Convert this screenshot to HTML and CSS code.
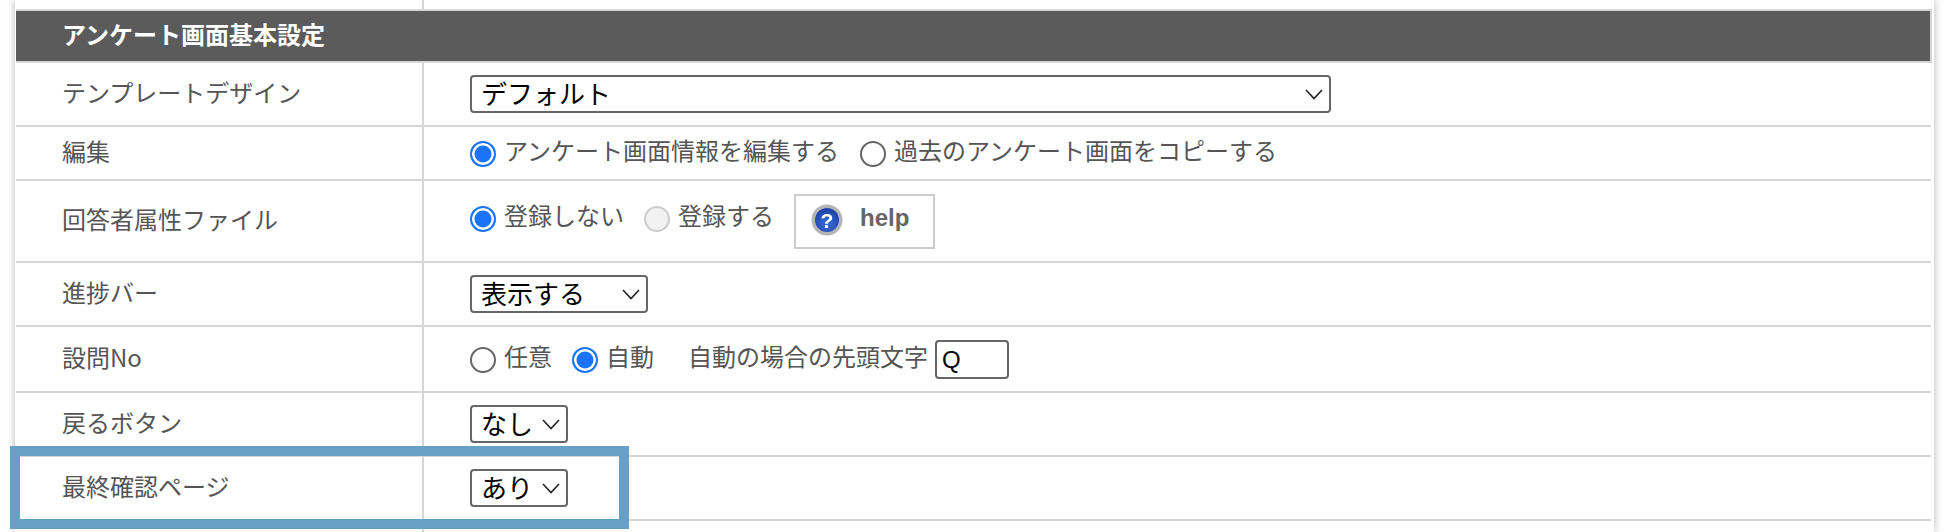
FILE: index.html
```html
<!DOCTYPE html>
<html lang="ja">
<head>
    <meta charset="UTF-8">
    <meta name="viewport" content="width=device-width, initial-scale=1.0">
    <title>アンケート画面基本設定</title>
    <link rel="stylesheet" href="styles.css">
</head>
<body>
    <div class="page">
        <div class="top-gap"><div class="top-gap-left"></div></div>
        <table class="settings">
            <colgroup>
                <col class="col-label">
                <col>
            </colgroup>
            <tr class="heading">
                <th colspan="2">アンケート画面基本設定</th>
            </tr>
            <!-- Template -->
            <tr class="row-template">
                <td class="label">テンプレートデザイン</td>
                <td class="field">
                    <select class="select select-wide"><option>デフォルト</option></select>
                </td>
            </tr>
            <!-- Edit -->
            <tr class="row-edit">
                <td class="label">編集</td>
                <td class="field">
                    <div class="edit-line">
                        <label class="choice choice-edit"><input type="radio" name="edit" checked>アンケート画面情報を編集する</label>
                        <label class="choice choice-edit"><input type="radio" name="edit">過去のアンケート画面をコピーする</label>
                    </div>
                </td>
            </tr>
            <!-- Respondent file -->
            <tr class="row-file">
                <td class="label">回答者属性ファイル</td>
                <td class="field">
                    <div class="file-line">
                        <label class="choice"><input type="radio" name="file" checked>登録しない</label>
                        <label class="choice"><input type="radio" name="file" disabled>登録する</label>
                        <a class="help" href="#">
                            <svg class="help-icon" viewBox="0 0 32 32" width="32" height="32">
                                <defs>
                                    <radialGradient id="help-ball" cx="50%" cy="65%" r="60%">
                                        <stop offset="0%" stop-color="#3d6fdc"/>
                                        <stop offset="100%" stop-color="#1d43a8"/>
                                    </radialGradient>
                                </defs>
                                <circle cx="16" cy="16" r="15.5" fill="#b5b5b5"/>
                                <circle cx="16" cy="16" r="12" fill="url(#help-ball)"/>
                                <text x="16" y="23.5" text-anchor="middle" class="help-mark">?</text>
                            </svg>
                            <span>help</span>
                        </a>
                    </div>
                </td>
            </tr>
            <!-- Progress bar -->
            <tr class="row-progress">
                <td class="label">進捗バー</td>
                <td class="field">
                    <select class="select select-mid"><option>表示する</option></select>
                </td>
            </tr>
            <!-- Question number -->
            <tr class="row-number">
                <td class="label">設問No</td>
                <td class="field">
                    <div class="number-line">
                        <label class="choice"><input type="radio" name="no">任意</label>
                        <label class="choice"><input type="radio" name="no" checked>自動</label>
                        <span class="prefix-label">自動の場合の先頭文字</span>
                        <input class="prefix" type="text" value="Q">
                    </div>
                </td>
            </tr>
            <!-- Back button -->
            <tr class="row-back">
                <td class="label">戻るボタン</td>
                <td class="field">
                    <select class="select select-small"><option>なし</option></select>
                </td>
            </tr>
            <!-- Confirm page -->
            <tr class="row-confirm">
                <td class="label">最終確認ページ</td>
                <td class="field">
                    <select class="select select-small"><option>あり</option></select>
                </td>
            </tr>
            <tr class="row-rest">
                <td class="label"></td>
                <td class="field"></td>
            </tr>
        </table>
        <div class="highlight"></div>
    </div>
</body>
</html>
```

FILE: styles.css
```css
* {
    box-sizing: border-box;
}

html, body {
    height: 100%;
    overflow: hidden;
}

body {
    margin: 0;
    background-color: #fff;
    font-family: "Noto Sans CJK JP", "Liberation Sans", sans-serif;
    color: #555;
}

.page {
    position: relative;
    margin: 0 24px 0 15px;
    padding: 0 2px 0 1px;
    height: 532px;
    background-color: #fff;
    box-shadow: 0 0 8px rgba(0, 0, 0, 0.3);
}

.top-gap {
    height: 9px;
}

.top-gap-left {
    width: 408px;
    height: 9px;
    border-right: 2px solid #d6d6d6;
}

.settings {
    width: 100%;
    border-collapse: collapse;
    table-layout: fixed;
}

.col-label {
    width: 407px;
}

.settings th,
.settings td {
    padding: 0;
    border: 2px solid #d6d6d6;
    border-left: none;
    border-right: none;
    font-size: 24px;
    font-weight: 400;
    line-height: 1.3;
}

.heading th {
    height: 52px;
    padding: 0 0 4px 46px;
    border-right: 2px solid #d6d6d6;
    background-color: #5b5b5b;
    color: #fff;
    font-weight: 700;
    text-align: left;
}

.settings .label {
    padding: 0 0 4px 46px;
    border-right: 2px solid #d6d6d6;
}

.settings .field {
    padding-left: 46px;
}

.row-template td { height: 64px; }
.row-edit td { height: 54px; }
.row-file td { height: 82px; }
.row-progress td { height: 64px; }
.row-number td { height: 66px; }
.row-back td { height: 64px; }
.row-confirm td { height: 64px; }
.row-rest td { height: 12px; border-bottom: none; }

.select {
    display: block;
    appearance: none;
    height: 38px;
    padding: 0 0 4px 9px;
    border: 2px solid #666;
    border-radius: 4px;
    background: #fff url("data:image/svg+xml,%3Csvg xmlns='http://www.w3.org/2000/svg' width='18' height='12'%3E%3Cpath d='M1 2 L9 10.5 L17 2' fill='none' stroke='%23222' stroke-width='1.6'/%3E%3C/svg%3E") no-repeat right 6px center;
    font-family: "Noto Sans CJK JP", sans-serif;
    font-size: 26px;
    line-height: 32px;
    color: #000;
}

.select-wide {
    width: 861px;
}

.select-mid {
    width: 178px;
}

.select-small {
    width: 98px;
}

.edit-line,
.number-line {
    display: flex;
    align-items: center;
}

.choice {
    display: flex;
    align-items: flex-start;
    gap: 8px;
    margin-right: 20px;
    padding-bottom: 6px;
}

.choice-edit {
    margin-right: 21px;
}

.choice input {
    appearance: none;
    flex: none;
    width: 26px;
    height: 26px;
    margin: 7px 0 0;
    border: 2px solid #666;
    border-radius: 50%;
    background-color: #fff;
}

.choice input:checked {
    border: 2.5px solid #1a73f8;
    background-color: #1a73f8;
    box-shadow: inset 0 0 0 2.5px #fff;
}

.choice input:disabled {
    border-color: #ccc;
    background-color: #f2f2f2;
}

.file-line {
    display: flex;
    align-items: flex-start;
}

.file-line .choice {
    padding: 5px 0 0;
}

.help {
    display: flex;
    align-items: center;
    width: 141px;
    height: 55px;
    padding-left: 15px;
    border: 2px solid #ccc;
    color: #666;
    font-family: "Liberation Sans", Arial, sans-serif;
    font-size: 24px;
    font-weight: 700;
    text-decoration: none;
}

.help span {
    margin: 0 0 7px 17px;
}

.help-icon {
    flex: none;
    margin-bottom: 2px;
    filter: blur(0.5px);
}

.help-mark {
    fill: #fff;
    font-family: "Liberation Sans", Arial, sans-serif;
    font-size: 21px;
    font-weight: 700;
}

.number-line .choice:nth-child(2) {
    margin-right: 34px;
}

.prefix-label {
    margin: 0 7px 6px 0;
}

.prefix {
    width: 74px;
    height: 39px;
    margin: 1px 0 0;
    padding: 0 0 0 5px;
    border: 2px solid #666;
    border-radius: 4px;
    font-family: "Liberation Sans", Arial, sans-serif;
    font-size: 24px;
    color: #000;
}

/* callout drawn over the table */
.highlight {
    position: absolute;
    left: -5px;
    top: 446px;
    width: 619px;
    height: 83px;
    border: 10px solid #66a0c4;
}
```
